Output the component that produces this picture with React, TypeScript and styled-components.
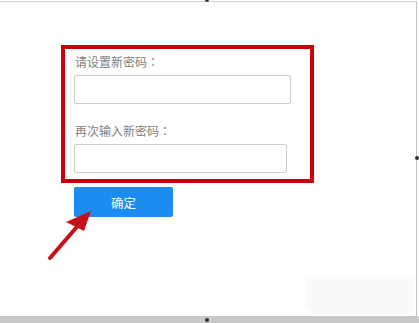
import React from "react";
import styled, { createGlobalStyle } from "styled-components";

const GlobalStyle = createGlobalStyle`
  html, body {
    margin: 0;
    padding: 0;
    background: #ffffff;
  }
  body {
    font-family: "Liberation Sans", "Noto Sans CJK SC", sans-serif;
  }
`;

const Screen = styled.div`
  position: relative;
  width: 419px;
  height: 323px;
  overflow: hidden;
  background: #ffffff;
  display: flex;
  flex-direction: column;
`;

const Window = styled.div`
  flex: 1;
  margin-top: 1px;
  width: 417px;
  border-top: 1px solid #cfcfcf;
  border-right: 1px solid #c4c4c4;
  padding: 43px 0 0 61px;
  box-sizing: border-box;
`;

const BottomBar = styled.div`
  height: 7px;
  background: #c8c8c8;
`;

const RedFrame = styled.div`
  width: 253px;
  height: 138px;
  box-sizing: border-box;
  border: 4px solid #c9000b;
  padding: 6px 0 0 9px;
  display: flex;
  flex-direction: column;
  gap: 20px;
`;

const Field = styled.div`
  display: flex;
  flex-direction: column;
  gap: 6px;
`;

const Label = styled.div`
  font-family: "Noto Sans CJK SC", sans-serif;
  font-size: 12px;
  line-height: 14px;
  color: #808080;
  padding-left: 1px;
`;

const Colon = styled.span`
  font-family: "Noto Sans CJK TC", sans-serif;
`;

const Input = styled.div<{ $w: number }>`
  width: ${(p) => p.$w}px;
  height: 29px;
  box-sizing: border-box;
  border: 1px solid #cccccc;
  border-radius: 2px;
  background: #ffffff;
`;

const Button = styled.div`
  margin: 4px 0 0 13px;
  width: 99px;
  height: 30px;
  background: #1a8cf2;
  border-radius: 2px;
  color: #ffffff;
  font-family: "Noto Sans CJK SC", sans-serif;
  font-size: 12.5px;
  display: flex;
  align-items: center;
  justify-content: center;
`;

const Handle = styled.div<{ $x: number; $y: number }>`
  position: absolute;
  left: ${(p) => p.$x}px;
  top: ${(p) => p.$y}px;
  width: 4px;
  height: 4px;
  border-radius: 50%;
  background: #333333;
`;

const Annotation = styled.svg`
  position: absolute;
  left: 0;
  top: 0;
  pointer-events: none;
`;

const Watermark = styled.div`
  position: absolute;
  right: 4px;
  bottom: 9px;
  width: 110px;
  height: 38px;
  background: #fafafa;
  border-radius: 0 0 6px 12px;
`;

export default function App() {
  return (
    <>
      <GlobalStyle />
      <Screen>
        <Window>
          <RedFrame>
            <Field>
              <Label>
                请设置新密码<Colon>：</Colon>
              </Label>
              <Input $w={217} />
            </Field>
            <Field>
              <Label>
                再次输入新密码<Colon>：</Colon>
              </Label>
              <Input $w={213} />
            </Field>
          </RedFrame>
          <Button>确定</Button>
        </Window>
        <BottomBar />
        <Watermark />
        <Handle $x={205} $y={-2} />
        <Handle $x={205} $y={318} />
        <Handle $x={415} $y={156} />
        <Annotation width="419" height="323" viewBox="0 0 419 323">
          <line x1="50" y1="258" x2="82" y2="221" stroke="#c8101a" strokeWidth="4" strokeLinecap="round" />
          <polygon points="91,211 66,222 84,231" fill="#c8101a" />
        </Annotation>
      </Screen>
    </>
  );
}
